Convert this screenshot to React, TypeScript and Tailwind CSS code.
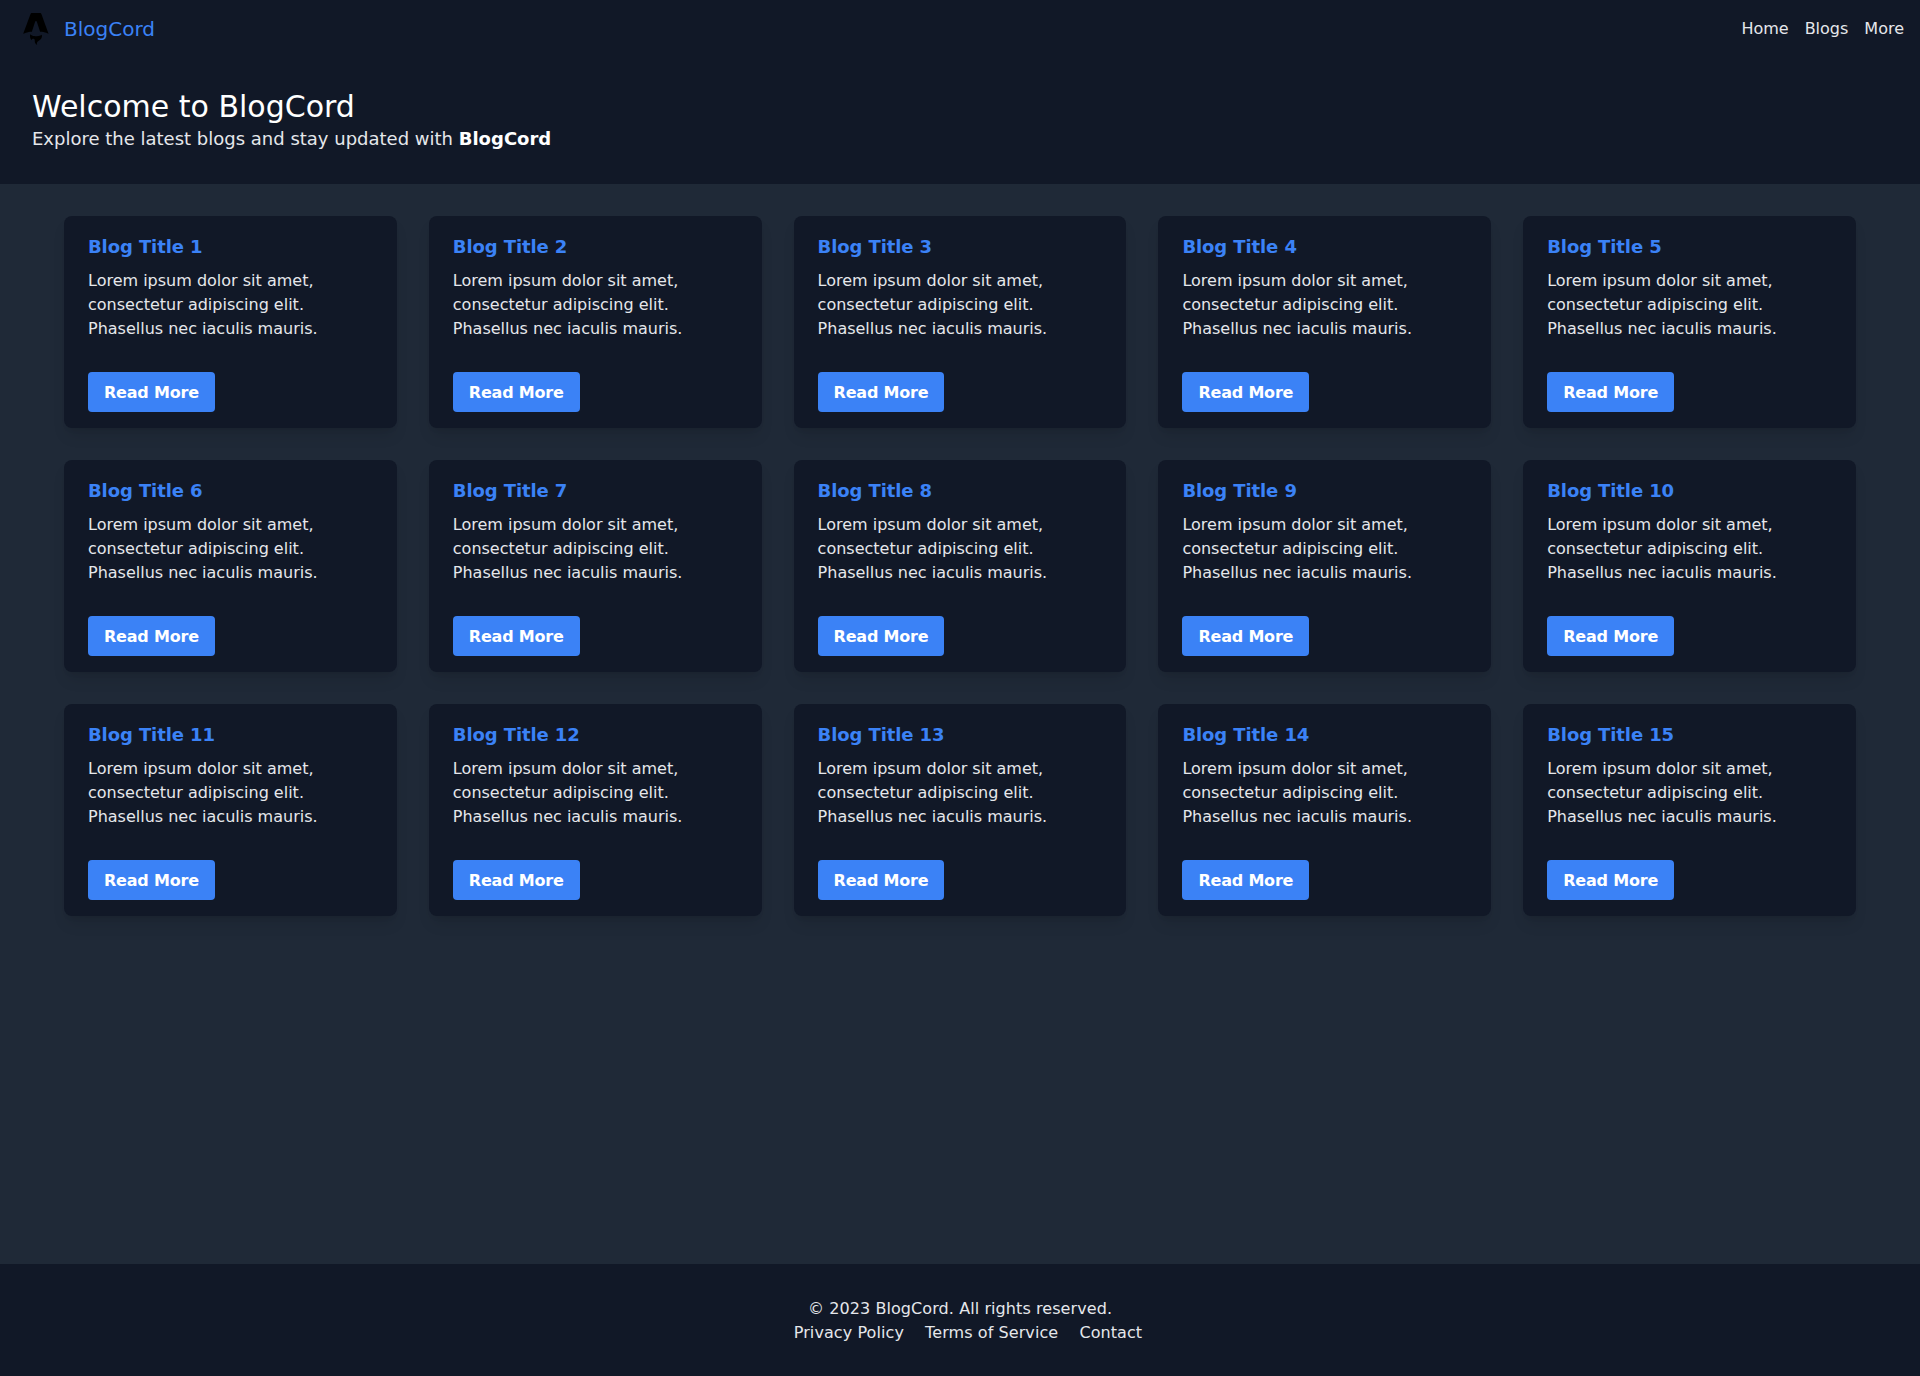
const posts = Array.from({ length: 15 }, (_, i) => ({
  id: i + 1,
  title: `Blog Title ${i + 1}`,
}));

const Logo = () => (
  <svg viewBox="0 0 85 107" fill="#000" className="w-10 h-8 mt-0.5">
    <path
      fillRule="evenodd"
      clipRule="evenodd"
      d="M27.5894 91.1365C22.7555 86.7178 21.3444 77.4335 23.3583 70.7072C26.8503 74.948 31.6888 76.2914 36.7005 77.0497C44.4375 78.2199 52.0359 77.7822 59.2232 74.2459C60.0454 73.8414 60.8052 73.3032 61.7036 72.7574C62.378 74.7133 62.5535 76.6877 62.318 78.7028C61.7452 83.6107 59.3029 87.4017 55.4173 90.2766C53.8636 91.4273 52.2193 92.4559 50.6144 93.5394C45.6837 96.8718 44.3498 100.779 46.2025 106.462C46.2465 106.601 46.286 106.74 46.3855 107.078C43.8683 105.951 42.0294 104.31 40.6286 102.153C39.1488 99.8774 38.4448 97.3602 38.4077 94.6364C38.3892 93.3109 38.3892 91.9736 38.2112 90.6666C37.7766 87.4801 36.2804 86.0533 33.4616 85.9711C30.5686 85.8866 28.2801 87.6747 27.6733 90.4905C27.627 90.7063 27.5594 90.9198 27.4922 91.1706L27.5894 91.1365Z"
    />
    <path d="M0 69.5866C0 69.5866 14.3139 62.6137 28.6678 62.6137L39.4901 29.1204C39.8953 27.5007 41.0783 26.3999 42.4139 26.3999C43.7495 26.3999 44.9325 27.5007 45.3377 29.1204L56.1601 62.6137C73.1601 62.6137 84.8278 69.5866 84.8278 69.5866C84.8278 69.5866 60.5145 3.35233 60.467 3.21944C59.7692 1.2612 58.5911 0 57.0029 0H27.8274C26.2392 0 25.1087 1.2612 24.3634 3.21944C24.3108 3.34983 0 69.5866 0 69.5866Z" />
  </svg>
);

export default function App() {
  return (
    <div className="min-h-screen flex flex-col bg-[#1f2937] text-[#e5e7eb] font-['DejaVu_Sans',sans-serif]">
      <header className="bg-[#111827]">
        <nav className="flex items-center justify-between h-14 px-4">
          <a href="#" className="flex items-center gap-2 text-xl text-[#3b82f6]">
            <Logo />
            <span className="mt-0.5">BlogCord</span>
          </a>
          <div className="flex gap-4 mt-0.5">
            <a href="#">Home</a>
            <a href="#">Blogs</a>
            <a href="#">More</a>
          </div>
        </nav>
        <div className="px-8 pt-[33px] pb-[31px]">
          <h1 className="text-3xl text-white">Welcome to BlogCord</h1>
          <p className="text-lg">
            Explore the latest blogs and stay updated with{" "}
            <strong className="font-bold text-white">BlogCord</strong>
          </p>
        </div>
      </header>

      <main className="flex-1 px-16 py-8">
        <div className="grid grid-cols-5 gap-8">
          {posts.map((post) => (
            <div key={post.id} className="bg-[#111827] rounded-lg shadow-lg px-6 pt-[17px] pb-4">
              <h2 className="text-lg font-bold tracking-[-0.1px] text-[#3b82f6] mb-2">{post.title}</h2>
              <p className="mb-[31px]">
                Lorem ipsum dolor sit amet, consectetur adipiscing elit. Phasellus nec iaculis mauris.
              </p>
              <button className="block bg-[#3b82f6] text-white font-bold tracking-[-0.2px] px-4 pt-[9px] pb-[7px] rounded">
                Read More
              </button>
            </div>
          ))}
        </div>
      </main>

      <footer className="bg-[#111827] pt-[33px] pb-[31px] text-center tracking-[0.08px]">
        <p>© 2023 BlogCord. All rights reserved.</p>
        <div>
          <a href="#" className="ml-4">Privacy Policy</a>{" "}
          <a href="#" className="ml-4">Terms of Service</a>{" "}
          <a href="#" className="ml-4">Contact</a>
        </div>
      </footer>
    </div>
  );
}
